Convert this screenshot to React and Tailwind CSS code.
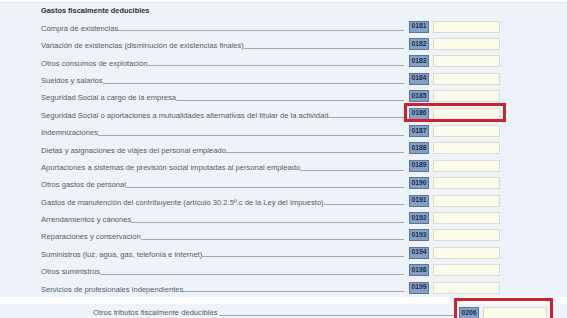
import React from "react";

const rows = [
  ["Compra de existencias", "0181"],
  ["Variación de existencias (disminución de existencias finales)", "0182"],
  ["Otros consumos de explotación", "0183"],
  ["Sueldos y salarios", "0184"],
  ["Seguridad Social a cargo de la empresa", "0185"],
  ["Seguridad Social o aportaciones a mutualidades alternativas del titular de la actividad", "0186", true],
  ["Indemnizaciones", "0187"],
  ["Dietas y asignaciones de viajes del personal empleado", "0188"],
  ["Aportaciones a sistemas de previsión social imputadas al personal empleado", "0189"],
  ["Otros gastos de personal", "0190"],
  ["Gastos de manutención del contribuyente (artículo 30.2.5º.c de la Ley del Impuesto)", "0191"],
  ["Arrendamientos y cánones", "0192"],
  ["Reparaciones y conservación", "0193"],
  ["Suministros (luz, agua, gas, telefonía e internet)", "0194"],
  ["Otros suministros", "0198"],
  ["Servicios de profesionales independientes", "0199"],
];

const Code = ({ code }) => (
  <span className="flex h-[12px] w-[20px] items-center justify-center border border-[#5d7598] bg-[#85a0c6] text-[6.8px] font-bold leading-none text-[#1c2d4d]">
    {code}
  </span>
);

const Field = ({ w = "w-[67px]" }) => (
  <span className={`h-[12px] ${w} border border-[#d9ddd2] bg-[#fbfce9]`} />
);

const Row = ({ label, code, hl }) => (
  <div className="relative flex h-[17.4px] items-center pl-[41px]">
    <div className="flex flex-1 items-end self-stretch pb-[3px]">
      <span className="whitespace-nowrap leading-none">{label}</span>
      <span className="mb-[1px] flex-1 border-b border-[#a4a9b0]" />
    </div>
    <div className="ml-[5px] flex w-[158px] items-center gap-[4px]">
      <Code code={code} />
      <Field />
    </div>
    {hl && (
      <div className="absolute left-[404px] top-[-2px] h-[19px] w-[102px] border-[3px] border-[#cf2231]" />
    )}
  </div>
);

export default function App() {
  return (
    <div
      className="h-[318px] w-[567px] overflow-hidden bg-white text-[7.6px] text-[#565d66]"
      style={{ fontFamily: "'Liberation Sans', Arial, sans-serif" }}
    >
      <div className="mt-[2px] h-[295px] border-t border-[#e2e6ee] bg-[#eef2f9]">
        <div className="flex h-[13px] items-end pl-[41px] text-[7.4px] font-bold text-[#2c323a]">
          Gastos fiscalmente deducibles
        </div>
        <div className="pt-[2px]">
          {rows.map(([label, code, hl]) => (
            <Row key={code} label={label} code={code} hl={hl} />
          ))}
        </div>
      </div>
      <div className="relative mt-[7px] flex h-[20px] items-start bg-[#eef2f9] pt-[3px]">
        <div className="flex w-[454px] items-end pl-[93px] pt-[2px]">
          <span className="whitespace-nowrap leading-none">Otros tributos fiscalmente deducibles</span>
          <span className="mb-[1px] ml-[1px] flex-1 border-b border-[#a4a9b0]" />
        </div>
        <div className="ml-[5px] flex items-center gap-[4px]">
          <Code code="0206" />
          <Field w="w-[64px]" />
        </div>
        <div className="absolute left-[454px] top-[-6px] h-[24px] w-[99px] border-[3px] border-[#cf2231]" />
      </div>
    </div>
  );
}
